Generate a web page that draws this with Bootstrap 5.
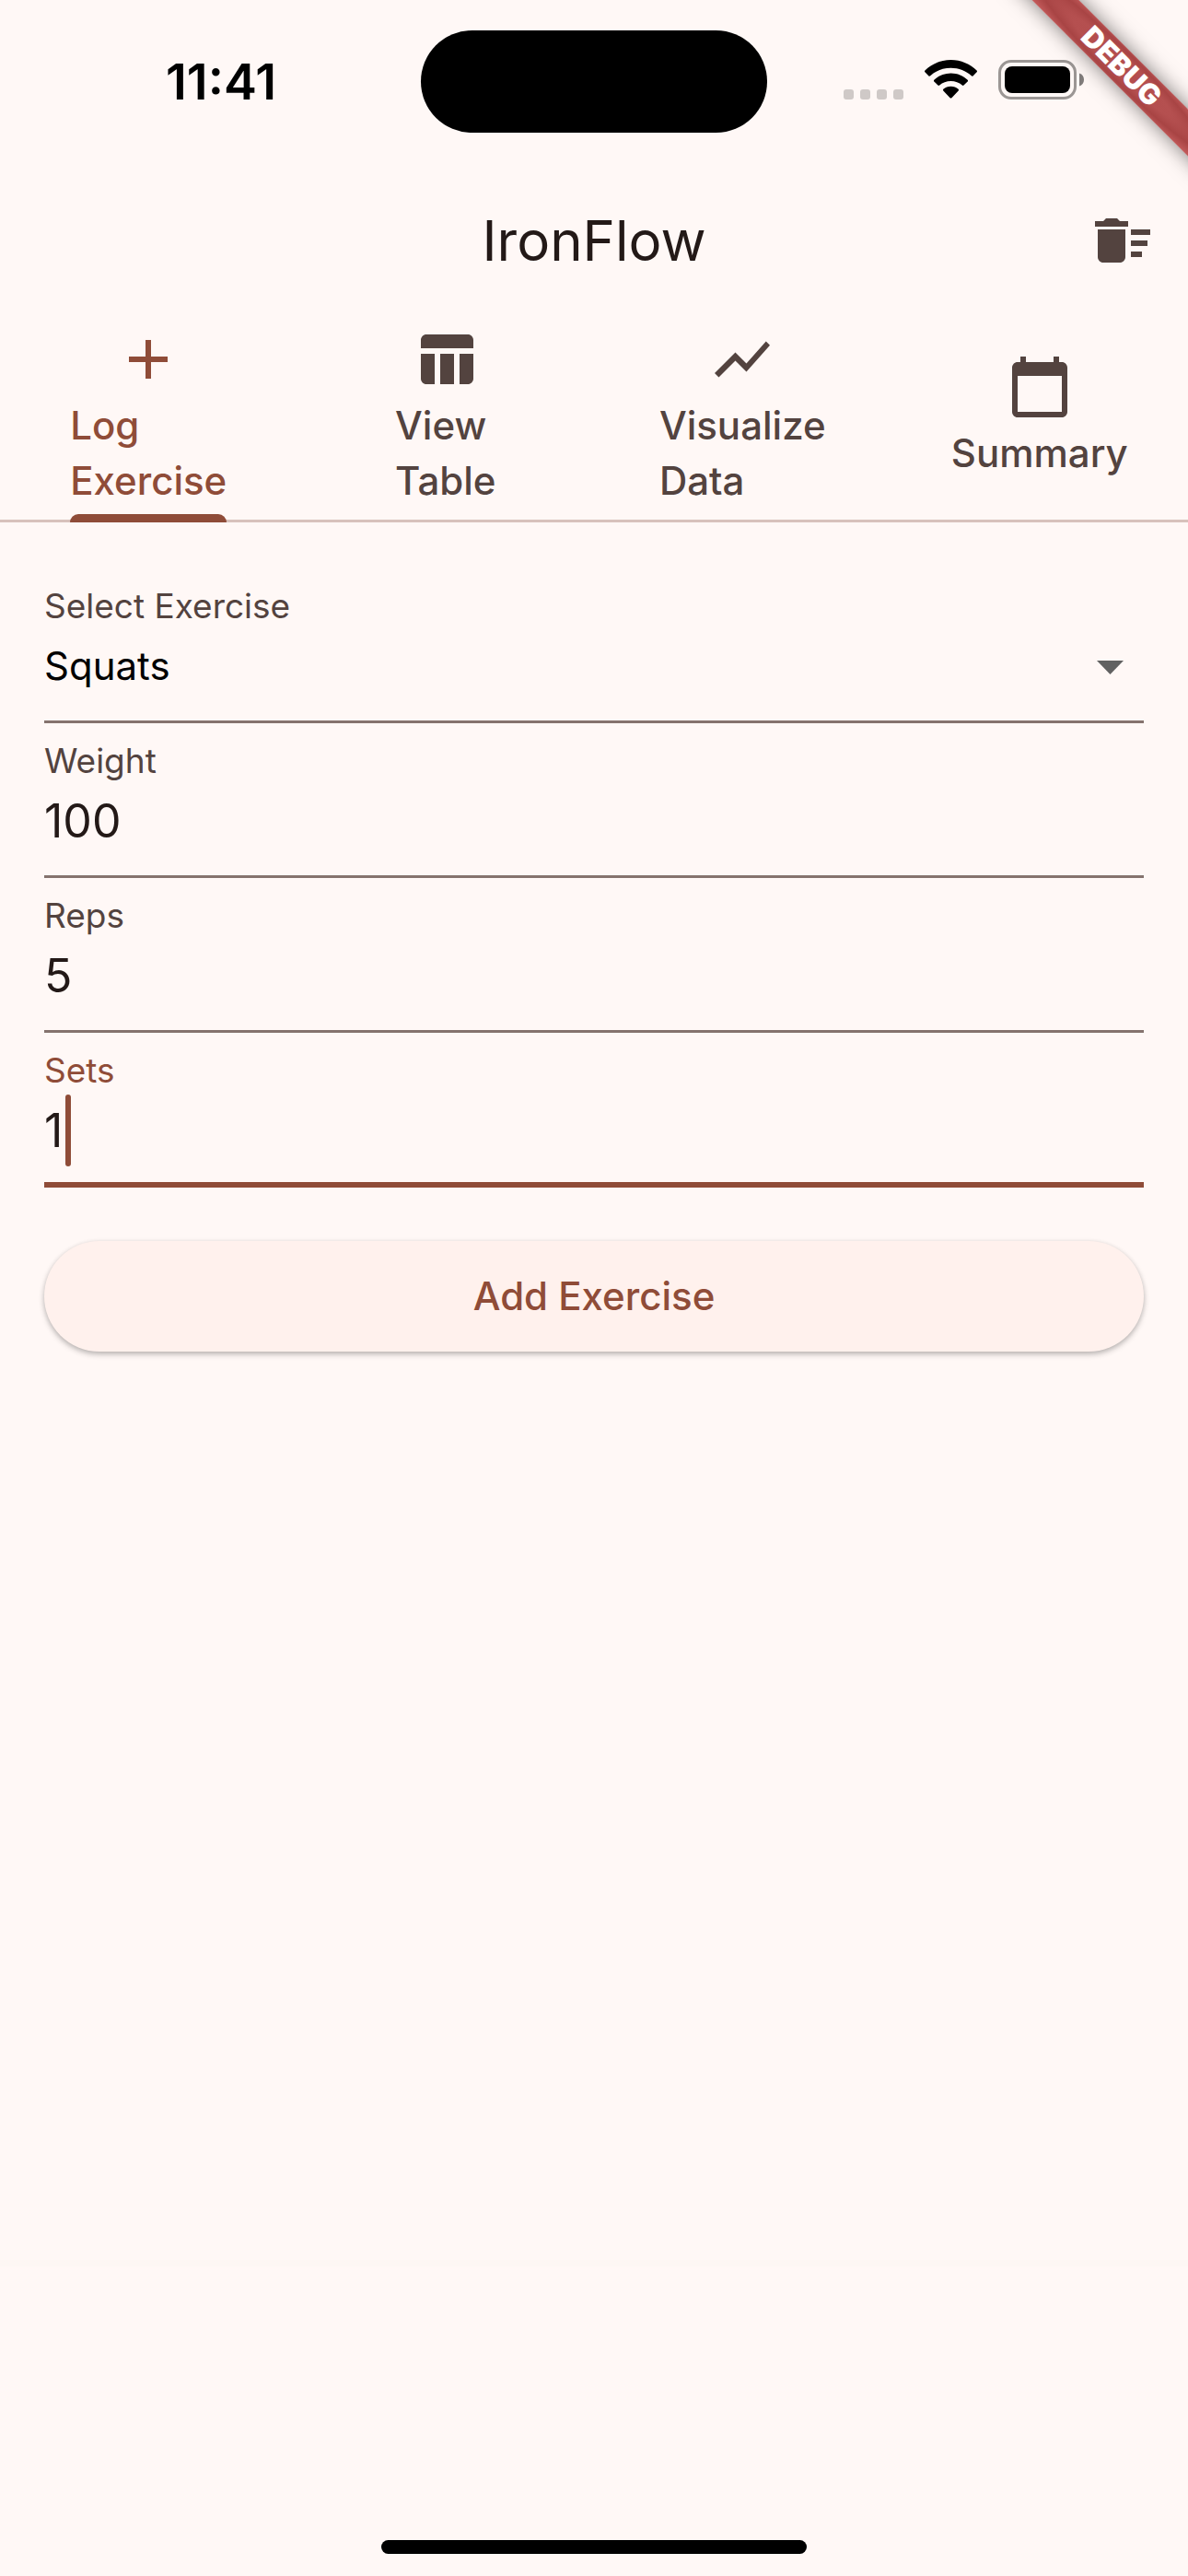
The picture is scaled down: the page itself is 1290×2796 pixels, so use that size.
<!DOCTYPE html>
<html lang="en">
<head>
<meta charset="utf-8">
<meta name="viewport" content="width=device-width, initial-scale=1">
<title>IronFlow</title>
<link rel="stylesheet" href="https://cdn.jsdelivr.net/npm/bootstrap@5.3.0/dist/css/bootstrap.min.css">
<style>
  :root {
    --surface: #fff8f6;
    --on-surface: #231917;
    --on-variant: #53433f;
    --primary: #8f4c38;
    --outline: #85736e;
    --divider: #d8c2bc;
  }
  body {
    background: var(--surface);
    color: var(--on-surface);
    font-family: Inter, "Liberation Sans", sans-serif;
  }
  svg { display: block; fill: currentColor; flex: none; }

  /* Status bar */
  .status-bar { height: 177px; color: #000; }
  .status-side { flex: 1 1 0; min-width: 0; }
  .status-time { padding-left: 180px; font-size: 54px; line-height: 60px; font-weight: 600; }
  .status-icons { padding-left: 83px; gap: 23px; }
  .signal-dots { fill: #cfc9c7; }
  .island { width: 376px; height: 111px; background: #000; border-radius: 56px; }

  /* Debug ribbon */
  .ribbon-clip { position: absolute; top: 0; right: 0; width: 240px; height: 240px; overflow: hidden; pointer-events: none; }
  .ribbon {
    position: absolute; top: 54px; right: -78px; width: 300px; height: 36px;
    transform: rotate(45deg);
    background: radial-gradient(ellipse at center, #b24c4c 0, #b55050 35%, #a84444 60%, #c05858 85%);
    box-shadow: 0 0 22px rgba(0, 0, 0, .5);
    color: #fff; font-size: 31px; line-height: 36px; font-weight: 900; text-align: center;
  }

  /* App bar */
  .app-bar { height: 168px; padding: 0 35px; }
  .app-bar h1 { font-size: 60px; line-height: 84px; font-weight: 400; }
  .bar-slot { width: 72px; }
  .icon-btn { color: var(--on-variant); line-height: 0; }

  /* Tabs */
  .tab-strip { border-bottom: 3px solid var(--divider); }
  .tab-strip .nav-item { flex: 1 1 0; }
  .tab-strip .nav-link {
    position: relative; height: 219px; gap: 6px; padding: 0 0 3px;
    color: var(--on-variant); font-size: 42px; line-height: 60px; font-weight: 500;
    text-align: left; border: 0; background: none;
  }
  .tab-strip .nav-link span { width: min-content; }
  .tab-strip .nav-link.active { color: var(--primary); }
  .tab-strip .nav-link.active::after {
    content: ""; position: absolute; left: 0; right: 0; bottom: -3px; height: 9px;
    background: var(--primary); border-radius: 9px 9px 0 0;
  }

  /* Form */
  .log-form { padding: 50px 48px 0; }
  .field { height: 168px; padding-top: 14px; border-bottom: 3px solid var(--outline); }
  .field label { display: block; font-size: 37px; line-height: 54px; color: var(--on-variant); }
  .field .form-control, .field .form-select {
    height: 76px; padding: 0; border: 0; border-radius: 0; background-color: transparent;
    color: var(--on-surface); font-size: 50px; line-height: 76px; box-shadow: none;
  }
  .field .form-select { background-image: none; color: #000; font-size: 42px; }
  .drop-arrow { position: absolute; right: 22px; top: 32px; color: #616161; pointer-events: none; }
  .field.is-focused { border-bottom: 6px solid var(--primary); }
  .field.is-focused label { color: var(--primary); }
  .text-caret { position: absolute; left: 23px; top: -1px; width: 6px; height: 78px; border-radius: 3px; background: var(--primary); }
  .btn-add {
    height: 120px; margin-top: 58px; border: 0; border-radius: 60px;
    background: #fff1ed; color: var(--primary); font-size: 42px; line-height: 60px; font-weight: 500;
    box-shadow: 0 3px 6px rgba(0, 0, 0, .24), 0 1px 5px rgba(0, 0, 0, .08);
  }

  /* Home area */
  .home-area { height: 343px; padding-bottom: 24px; background: linear-gradient(#fdf7f4, #fdf7f4) top / 100% 7px no-repeat; }
  .home-pill { width: 462px; height: 15px; border-radius: 8px; background: #000; }
</style>
<script src="https://cdn.jsdelivr.net/npm/bootstrap@5.3.0/dist/js/bootstrap.bundle.min.js" defer></script>
</head>
<body>
<div class="d-flex flex-column min-vh-100 position-relative">

  <div class="status-bar d-flex align-items-center">
    <div class="status-side"><div class="status-time">11:41</div></div>
    <div class="island"></div>
    <div class="status-side">
      <div class="status-icons d-flex align-items-center">
        <svg class="signal-dots" width="65" height="44" viewBox="0 0 65 44" aria-hidden="true">
          <rect x="0" y="30" width="11" height="11" rx="3"/><rect x="18" y="30" width="11" height="11" rx="3"/>
          <rect x="36" y="30" width="11" height="11" rx="3"/><rect x="54" y="30" width="11" height="11" rx="3"/>
        </svg>
        <svg width="57" height="48" viewBox="0 0 57 48" aria-hidden="true">
          <path d="M28.500 0C39.500 0 49.500 4.500 56.600 11.500Q57.400 12.400 56.600 13.300L52.500 17.400Q51.700 18.100 50.800 17.300C45 11.900 37.200 8.800 28.500 8.800S12 11.900 6.200 17.300Q5.300 18.100 4.500 17.400L.4 13.300Q-.4 12.400 .4 11.500C7.500 4.500 17.500 0 28.500 0Z"/>
          <path d="M28.500 14.500C35.600 14.500 42 17.300 46.700 21.800Q47.400 22.700 46.700 23.500L42.500 27.600Q41.700 28.300 40.800 27.600C37.500 24.800 33.200 23.100 28.500 23.100S19.500 24.800 16.200 27.600Q15.300 28.300 14.500 27.600L10.300 23.500Q9.600 22.700 10.300 21.800C15 17.300 21.400 14.500 28.500 14.500Z"/>
          <path d="M28.500 28.700C31.700 28.700 34.500 29.900 36.700 31.800Q37.500 32.700 36.700 33.500L29.400 41.200Q28.500 42 27.600 41.200L20.300 33.500Q19.500 32.700 20.300 31.800C22.500 29.900 25.300 28.700 28.500 28.700Z"/>
        </svg>
        <svg width="94" height="48" viewBox="0 0 94 48" aria-hidden="true">
          <rect x="1.500" y="1.500" width="82" height="40" rx="12.500" fill="none" stroke="#9b9694" stroke-width="3"/>
          <rect x="7" y="7" width="71" height="29" rx="8"/>
          <path d="M88 14.500C91 15.500 93 18 93 21.500S91 27.500 88 28.500Z" fill="#807c7b"/>
        </svg>
      </div>
    </div>
  </div>

  <header class="app-bar d-flex align-items-center justify-content-between">
    <div class="bar-slot"></div>
    <h1 class="m-0">IronFlow</h1>
    <button type="button" class="btn icon-btn p-0 border-0" aria-label="Clear exercises">
      <svg width="72" height="72" viewBox="0 0 24 24"><path d="M15 16h4v2h-4zm0-8h7v2h-7zm0 4h6v2h-6zM3 18c0 1.100.9 2 2 2h6c1.100 0 2-.9 2-2V8H3v10zM14 5h-3l-1-1H6L5 5H2v2h12z"/></svg>
    </button>
  </header>

  <ul class="nav tab-strip" role="tablist">
    <li class="nav-item d-flex justify-content-center" role="presentation">
      <button type="button" role="tab" aria-selected="true" class="nav-link active d-flex flex-column align-items-center justify-content-center">
        <svg width="72" height="72" viewBox="0 0 24 24" aria-hidden="true"><path d="M19 13h-6v6h-2v-6H5v-2h6V5h2v6h6v2z"/></svg>
        <span>Log Exercise</span>
      </button>
    </li>
    <li class="nav-item d-flex justify-content-center" role="presentation">
      <button type="button" role="tab" aria-selected="false" class="nav-link d-flex flex-column align-items-center justify-content-center">
        <svg width="72" height="72" viewBox="0 0 24 24" aria-hidden="true"><path d="M10 10.020h5V21h-5V10.020zM17 21h3c1.100 0 2-.9 2-2v-9h-5v11zm3-18H5c-1.100 0-2 .9-2 2v3h19V5c0-1.100-.9-2-2-2zM3 19c0 1.100.9 2 2 2h3V10H3v9z"/></svg>
        <span>View Table</span>
      </button>
    </li>
    <li class="nav-item d-flex justify-content-center" role="presentation">
      <button type="button" role="tab" aria-selected="false" class="nav-link d-flex flex-column align-items-center justify-content-center">
        <svg width="72" height="72" viewBox="0 0 24 24" aria-hidden="true"><path d="M3.500 18.490l6-6.010 4 4L22 6.920l-1.410-1.410-7.090 7.970-4-4L2 16.990z"/></svg>
        <span>Visualize Data</span>
      </button>
    </li>
    <li class="nav-item d-flex justify-content-center" role="presentation">
      <button type="button" role="tab" aria-selected="false" class="nav-link d-flex flex-column align-items-center justify-content-center">
        <svg width="72" height="72" viewBox="0 0 24 24" aria-hidden="true"><path d="M20 3h-1V1h-2v2H7V1H5v2H4c-1.100 0-2 .9-2 2v16c0 1.100.9 2 2 2h16c1.100 0 2-.9 2-2V5c0-1.100-.9-2-2-2zm0 18H4V8h16v13z"/></svg>
        <span>Summary</span>
      </button>
    </li>
  </ul>

  <main class="flex-grow-1">
    <form class="log-form">
      <div class="field">
        <label for="exercise">Select Exercise</label>
        <div class="position-relative">
          <select id="exercise" class="form-select"><option selected>Squats</option></select>
          <svg class="drop-arrow" width="29" height="15" viewBox="0 0 29 15" aria-hidden="true"><path d="M0 0h29L14.500 15z"/></svg>
        </div>
      </div>
      <div class="field">
        <label for="weight">Weight</label>
        <input id="weight" type="text" inputmode="decimal" class="form-control" value="100">
      </div>
      <div class="field">
        <label for="reps">Reps</label>
        <input id="reps" type="text" inputmode="numeric" class="form-control" value="5">
      </div>
      <div class="field is-focused">
        <label for="sets">Sets</label>
        <div class="position-relative">
          <input id="sets" type="text" inputmode="numeric" class="form-control" value="1">
          <span class="text-caret"></span>
        </div>
      </div>
      <button type="button" class="btn btn-add w-100">Add Exercise</button>
    </form>
  </main>

  <footer class="home-area d-flex align-items-end justify-content-center">
    <div class="home-pill"></div>
  </footer>

  <div class="ribbon-clip"><div class="ribbon">DEBUG</div></div>
</div>
</body>
</html>
